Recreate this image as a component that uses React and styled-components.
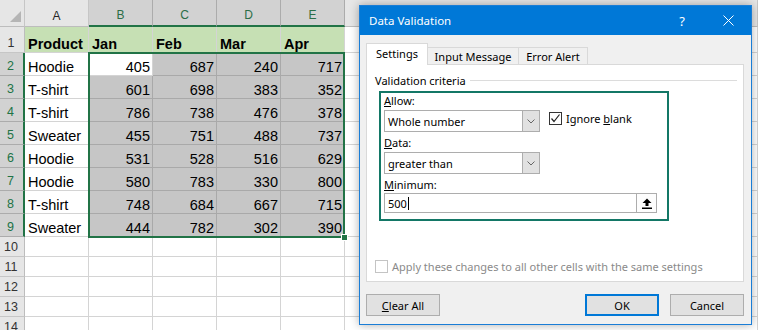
import React from 'react';
import styled, { createGlobalStyle } from 'styled-components';

const GlobalStyle = createGlobalStyle`
  html, body {
    margin: 0;
    padding: 0;
    background: #fff;
    overflow: hidden;
  }
`;

const Screen = styled.div`
  position: relative;
  width: 758px;
  height: 330px;
  overflow: hidden;
  background: #fff;
`;

/* ---------- spreadsheet ---------- */

const Sheet = styled.div`
  display: grid;
  grid-template-columns: 25px repeat(5, 64px) 1fr;
  grid-template-rows: 27px 26px repeat(8, 23px) repeat(5, 20px);
  width: 758px;
  font-family: "Liberation Sans", Arial, sans-serif;
  font-size: 14.5px;
  color: #000;
`;

const Corner = styled.div`
  grid-row: 1;
  grid-column: 1;
  position: relative;
  background: #e6e6e6;
  border-right: 1px solid #c6c6c6;
  border-bottom: 1px solid #bdbdbd;

  &::after {
    content: '';
    position: absolute;
    right: 3px;
    bottom: 4px;
    width: 11px;
    height: 11px;
    background: #b5b5b5;
    clip-path: polygon(100% 0, 100% 100%, 0 100%);
  }
`;

const ColHead = styled.div`
  grid-row: 1;
  grid-column: ${({ $col }) => $col};
  box-sizing: border-box;
  display: flex;
  align-items: flex-end;
  justify-content: center;
  padding-bottom: 3px;
  font-size: 12px;
  background: ${({ $active }) => ($active ? '#d2d2d2' : '#e6e6e6')};
  color: ${({ $active }) => ($active ? '#2b6e47' : '#262626')};
  border-right: 1px solid ${({ $active }) => ($active ? '#acacac' : '#c6c6c6')};
  border-bottom: ${({ $active }) => ($active ? '2px solid #217346' : '1px solid #bdbdbd')};
`;

const RowHead = styled.div`
  grid-row: ${({ $row }) => $row};
  grid-column: 1;
  box-sizing: border-box;
  display: flex;
  align-items: flex-end;
  justify-content: center;
  padding: 0 2px 2px 0;
  font-size: 12.5px;
  background: ${({ $active }) => ($active ? '#d2d2d2' : '#e6e6e6')};
  color: ${({ $active }) => ($active ? '#217346' : '#333')};
  border-bottom: 1px solid ${({ $active }) => ($active ? '#acacac' : '#c6c6c6')};
  border-right: ${({ $active }) => ($active ? '2px solid #217346' : '1px solid #bdbdbd')};
`;

const fills = {
  head: '#c6e0b4',
  sel: '#c6c6c6',
  none: '#fff',
};

const Cell = styled.div`
  grid-row: ${({ $row }) => $row};
  grid-column: ${({ $col }) => $col};
  box-sizing: border-box;
  display: flex;
  align-items: flex-end;
  justify-content: ${({ $num }) => ($num ? 'flex-end' : 'flex-start')};
  padding: 0 2px 0 3px;
  line-height: 16px;
  white-space: nowrap;
  overflow: hidden;
  font-weight: ${({ $bold }) => ($bold ? 700 : 400)};
  background: ${({ $fill }) => fills[$fill || 'none']};
  border-right: 1px solid ${({ $fill }) => ($fill === 'sel' ? '#a9a9a9' : '#d4d4d4')};
  border-bottom: 1px solid ${({ $fill }) => ($fill === 'sel' ? '#a9a9a9' : '#d4d4d4')};
`;

const SelectionFrame = styled.div`
  grid-row: 3 / 11;
  grid-column: 3 / 7;
  position: relative;
  z-index: 2;
  margin: -1px 0 -1px -1px;
  border: 2px solid #217346;
  pointer-events: none;
`;

const FillHandle = styled.span`
  position: absolute;
  right: -5px;
  bottom: -5px;
  width: 5px;
  height: 5px;
  background: #217346;
  border: 1px solid #fff;
`;

/* ---------- dialog ---------- */

const Dialog = styled.div`
  position: absolute;
  left: 359px;
  top: 5px;
  width: 393px;
  box-sizing: border-box;
  background: #f0f0f0;
  border: 1px solid #1a7dd6;
  box-shadow: 0 0 9px rgba(0, 0, 0, 0.32);
  font-family: "Noto Sans", "Open Sans", sans-serif;
  font-size: 11px;
  color: #000;
  display: flex;
  flex-direction: column;
`;

const TitleBar = styled.div`
  height: 29px;
  display: flex;
  align-items: center;
  background: #0078d7;
  color: #fff;
  font-size: 11.5px;
  padding-left: 9px;
`;

const Title = styled.span`
  flex: 1;
`;

const TitleButton = styled.span`
  width: 46px;
  height: 29px;
  display: flex;
  align-items: center;
  justify-content: center;
  font-size: 13px;
`;

const Body = styled.div`
  padding: 8px 7px 8px 6px;
  display: flex;
  flex-direction: column;
`;

const TabRow = styled.div`
  display: flex;
  align-items: flex-end;
  height: 22px;
  position: relative;
  z-index: 1;
  margin-bottom: -1px;
`;

const Tab = styled.div`
  width: ${({ $w }) => $w}px;
  height: ${({ $active }) => ($active ? 22 : 18)}px;
  box-sizing: border-box;
  margin-left: ${({ $first }) => ($first ? 0 : -1)}px;
  display: flex;
  align-items: center;
  justify-content: center;
  padding-bottom: ${({ $active }) => ($active ? 3 : 0)}px;
  background: ${({ $active }) => ($active ? '#fff' : '#f0f0f0')};
  border: 1px solid #d9d9d9;
  border-bottom: ${({ $active }) => ($active ? 'none' : '1px solid #d9d9d9')};
`;

const Panel = styled.div`
  height: 218px;
  box-sizing: border-box;
  background: #fff;
  border: 1px solid #d9d9d9;
  padding: 7px 6px 7px 8px;
  display: flex;
  flex-direction: column;
`;

const Legend = styled.div`
  display: flex;
  align-items: center;
  gap: 4px;
  height: 16px;
`;

const LegendLine = styled.span`
  flex: 1;
  height: 1px;
  background: #dcdcdc;
`;

const Criteria = styled.div`
  width: 290px;
  height: 130px;
  box-sizing: border-box;
  margin: 3px 0 0 4px;
  border: 2px solid #137766;
  padding: 0 0 0 3px;
  display: flex;
  flex-direction: column;
`;

const FieldLabel = styled.div`
  height: 16px;
  line-height: 16px;
  margin-top: ${({ $gap }) => $gap || 0}px;
`;

const Key = styled.span`
  text-decoration: underline;
`;

const FieldRow = styled.div`
  display: flex;
  align-items: flex-start;
  gap: 9px;
  margin-top: 1px;
`;

const Select = styled.div`
  width: 156px;
  height: 22px;
  box-sizing: border-box;
  display: flex;
  background: #fff;
  border: 1px solid #adadad;
`;

const SelectValue = styled.span`
  flex: 1;
  display: flex;
  align-items: center;
  padding-left: 3px;
`;

const SelectArrow = styled.span`
  width: 16px;
  display: flex;
  align-items: center;
  justify-content: center;
  background: #e1e1e1;
  border-left: 1px solid #adadad;
`;

const CheckLabel = styled.label`
  display: flex;
  align-items: center;
  gap: 4px;
  margin-top: ${({ $top }) => $top || 0};
  align-self: flex-start;
  color: ${({ $disabled }) => ($disabled ? '#8a8a8a' : '#000')};
`;

const Box = styled.span`
  width: 13px;
  height: 13px;
  box-sizing: border-box;
  display: flex;
  align-items: center;
  justify-content: center;
  background: #fff;
  border: 1px solid ${({ $disabled }) => ($disabled ? '#c4c4c4' : '#333')};
`;

const TextInput = styled.div`
  width: 273px;
  height: 20px;
  box-sizing: border-box;
  display: flex;
  align-items: center;
  background: #fff;
  border: 1px solid #adadad;
  padding-left: 3px;
`;

const Caret = styled.span`
  width: 1px;
  height: 13px;
  background: #000;
  margin-left: 1px;
`;

const RefButton = styled.span`
  margin-left: auto;
  width: 20px;
  height: 18px;
  box-sizing: border-box;
  display: flex;
  align-items: center;
  justify-content: center;
  background: #fdfdfd;
  border-left: 1px solid #adadad;
`;

const ButtonRow = styled.div`
  display: flex;
  gap: 11px;
  margin-top: 12px;
`;

const Button = styled.div`
  width: 74px;
  height: 22px;
  box-sizing: border-box;
  display: flex;
  align-items: center;
  justify-content: center;
  background: #e1e1e1;
  border: ${({ $primary }) => ($primary ? '2px solid #0078d7' : '1px solid #adadad')};
  margin-left: ${({ $push }) => ($push ? 'auto' : 0)};
`;

const Chevron = () => (
  <svg width="8" height="5" viewBox="0 0 8 5">
    <polyline points="0.5,0.5 4,4 7.5,0.5" fill="none" stroke="#666" strokeWidth="1" />
  </svg>
);

const Check = () => (
  <svg width="11" height="11" viewBox="0 0 11 11">
    <polyline points="1.5,5.5 4,8.5 9.5,1.5" fill="none" stroke="#222" strokeWidth="1.2" />
  </svg>
);

const CollapseIcon = () => (
  <svg width="10" height="11" viewBox="0 0 10 11">
    <polygon points="5,0.5 9.5,5 6.5,5 6.5,8 3.5,8 3.5,5 0.5,5" fill="#000" />
    <rect x="0" y="9.5" width="10" height="1.5" fill="#000" />
  </svg>
);

const CloseIcon = () => (
  <svg width="11" height="11" viewBox="0 0 11 11">
    <path d="M0.5 0.5 L10.5 10.5 M10.5 0.5 L0.5 10.5" stroke="#fff" strokeWidth="1" />
  </svg>
);

const months = ['Jan', 'Feb', 'Mar', 'Apr'];
const letters = ['A', 'B', 'C', 'D', 'E', ''];

const rows = [
  ['Hoodie', 405, 687, 240, 717],
  ['T-shirt', 601, 698, 383, 352],
  ['T-shirt', 786, 738, 476, 378],
  ['Sweater', 455, 751, 488, 737],
  ['Hoodie', 531, 528, 516, 629],
  ['Hoodie', 580, 783, 330, 800],
  ['T-shirt', 748, 684, 667, 715],
  ['Sweater', 444, 782, 302, 390],
];

const emptyRows = [10, 11, 12, 13, 14];

const Spreadsheet = () => (
  <Sheet>
    <Corner />
    {letters.map((l, i) => (
      <ColHead key={`h${i}`} $col={i + 2} $active={i >= 1 && i <= 4}>
        {l}
      </ColHead>
    ))}

    <RowHead $row={2}>1</RowHead>
    <Cell $row={2} $col={2} $fill="head" $bold>Product</Cell>
    {months.map((m, i) => (
      <Cell key={m} $row={2} $col={i + 3} $fill="head" $bold>{m}</Cell>
    ))}
    <Cell $row={2} $col={7} />

    {rows.map((r, ri) => {
      const row = ri + 3;
      return (
        <React.Fragment key={row}>
          <RowHead $row={row} $active>{ri + 2}</RowHead>
          <Cell $row={row} $col={2}>{r[0]}</Cell>
          {r.slice(1).map((v, ci) => (
            <Cell
              key={ci}
              $row={row}
              $col={ci + 3}
              $num
              $fill={ri === 0 && ci === 0 ? 'none' : 'sel'}
            >
              {v}
            </Cell>
          ))}
          <Cell $row={row} $col={7} />
        </React.Fragment>
      );
    })}

    {emptyRows.map((n, i) => (
      <React.Fragment key={n}>
        <RowHead $row={i + 11}>{n}</RowHead>
        {[2, 3, 4, 5, 6, 7].map((c) => (
          <Cell key={c} $row={i + 11} $col={c} />
        ))}
      </React.Fragment>
    ))}

    <SelectionFrame>
      <FillHandle />
    </SelectionFrame>
  </Sheet>
);

const DataValidation = () => (
  <Dialog>
    <TitleBar>
      <Title>Data Validation</Title>
      <TitleButton>?</TitleButton>
      <TitleButton>
        <CloseIcon />
      </TitleButton>
    </TitleBar>
    <Body>
      <TabRow>
        <Tab $first $active $w={62}>Settings</Tab>
        <Tab $w={92}>Input Message</Tab>
        <Tab $w={70}>Error Alert</Tab>
      </TabRow>
      <Panel>
        <Legend>
          <span>Validation criteria</span>
          <LegendLine />
        </Legend>
        <Criteria>
          <FieldLabel>
            <Key>A</Key>llow:
          </FieldLabel>
          <FieldRow>
            <Select>
              <SelectValue>Whole number</SelectValue>
              <SelectArrow>
                <Chevron />
              </SelectArrow>
            </Select>
            <CheckLabel $top="1px">
              <Box>
                <Check />
              </Box>
              <span>
                Ignore <Key>b</Key>lank
              </span>
            </CheckLabel>
          </FieldRow>
          <FieldLabel $gap={3}>
            <Key>D</Key>ata:
          </FieldLabel>
          <FieldRow>
            <Select>
              <SelectValue>greater than</SelectValue>
              <SelectArrow>
                <Chevron />
              </SelectArrow>
            </Select>
          </FieldRow>
          <FieldLabel $gap={3}>
            <Key>M</Key>inimum:
          </FieldLabel>
          <TextInput>
            500
            <Caret />
            <RefButton>
              <CollapseIcon />
            </RefButton>
          </TextInput>
        </Criteria>
        <CheckLabel $disabled $top="auto">
          <Box $disabled />
          <span>Apply these changes to all other cells with the same settings</span>
        </CheckLabel>
      </Panel>
      <ButtonRow>
        <Button>
          <span>
            <Key>C</Key>lear All
          </span>
        </Button>
        <Button $primary $push>OK</Button>
        <Button>Cancel</Button>
      </ButtonRow>
    </Body>
  </Dialog>
);

export default function App() {
  return (
    <Screen>
      <GlobalStyle />
      <Spreadsheet />
      <DataValidation />
    </Screen>
  );
}
